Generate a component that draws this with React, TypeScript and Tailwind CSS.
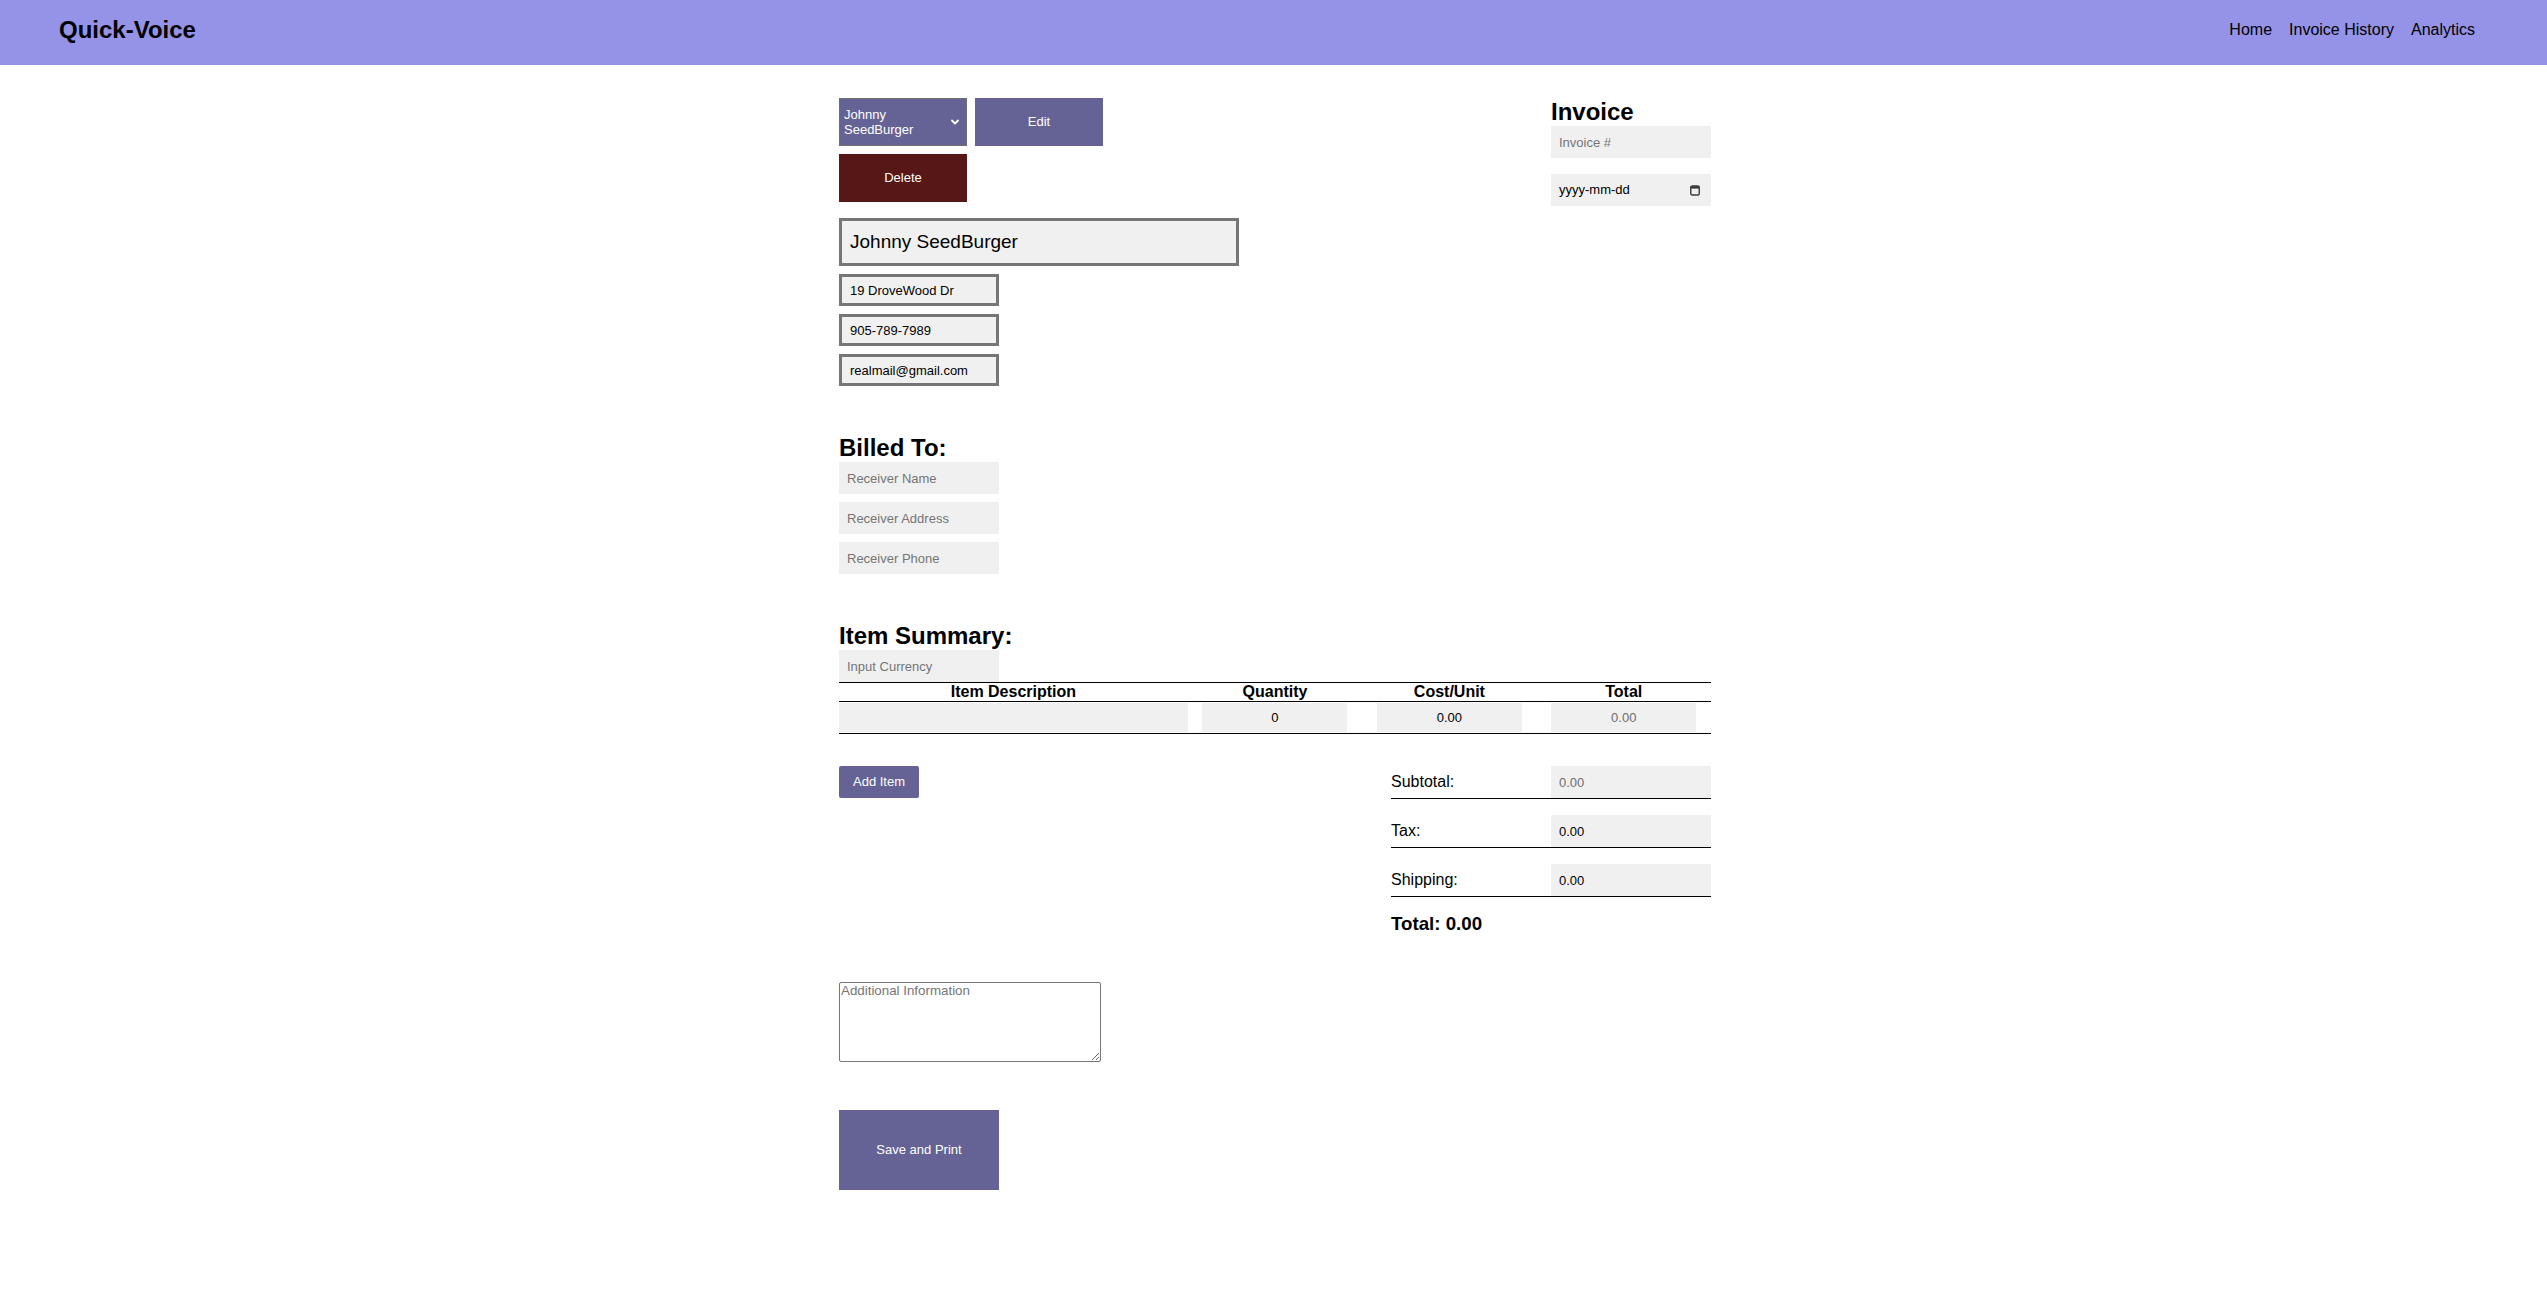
import { useState } from 'react';

const inputBase =
  'h-[32px] w-[160px] bg-[#f0f0f0] px-2 text-[13px] text-black placeholder:text-[#757575] outline-none';

const boxedInput =
  'h-[32px] w-[160px] border-[3px] border-[#767676] bg-[#f0f0f0] px-2 text-[13px] text-black outline-none';

const ChevronDown = () => (
  <svg width="8" height="6" viewBox="0 0 8 6" className="shrink-0">
    <path d="M1 1.5 L4 4.5 L7 1.5" stroke="white" strokeWidth="1.8" fill="none" strokeLinecap="round" strokeLinejoin="round" />
  </svg>
);

const CalendarIcon = () => (
  <svg width="10" height="11" viewBox="0 0 10 11">
    <rect x="0.75" y="1" width="8.5" height="9" rx="1.5" stroke="#3a3a3a" strokeWidth="1.4" fill="none" />
    <rect x="0.75" y="1" width="8.5" height="2.6" fill="#3a3a3a" />
  </svg>
);

const TotalsRow = ({ label, value, muted }: { label: string; value: string; muted?: boolean }) => (
  <div className="flex items-center justify-between border-b border-black">
    <span className="text-[16px] leading-[18px] pb-[1px]">{label}</span>
    <input
      readOnly
      defaultValue={value}
      className={`${inputBase} ${muted ? '!text-[#6d6d6d]' : ''}`}
    />
  </div>
);

export default function App() {
  const [rows] = useState([{ desc: '', qty: '0', cost: '0.00', total: '0.00' }]);

  return (
    <div className="min-h-screen bg-white text-black font-['Liberation_Sans',Arial,sans-serif]">
      <header className="h-[65px] bg-[#9593e8] flex items-center justify-between pl-[59px] pr-[72px] pb-[5px]">
        <h1 className="text-[24px] font-bold leading-[28px]">Quick-Voice</h1>
        <nav className="flex gap-[17px] text-[16px] leading-[18px]">
          <a>Home</a>
          <a>Invoice History</a>
          <a>Analytics</a>
        </nav>
      </header>

      <main className="w-[875px] pl-[3px] mx-auto pt-[33px] pb-[100px]">
        {/* sender + invoice meta */}
        <section className="flex justify-between">
          <div className="flex flex-col">
            <div className="flex gap-2">
              <div className="h-[48px] w-[128px] bg-[#656396] border border-[#6e6e6e] flex items-center justify-between pl-[4px] pr-[7px] text-white text-[13px] leading-[15px]">
                <span className="w-[100px]">Johnny SeedBurger</span>
                <ChevronDown />
              </div>
              <button className="h-[48px] w-[128px] bg-[#656396] text-white text-[13px]">Edit</button>
            </div>
            <button className="mt-2 h-[48px] w-[128px] bg-[#581717] text-white text-[13px]">Delete</button>

            <input
              readOnly
              defaultValue="Johnny SeedBurger"
              className="mt-4 h-[48px] w-[400px] border-[3px] border-[#767676] bg-[#f0f0f0] px-2 text-[19px] outline-none"
            />
            <input readOnly defaultValue="19 DroveWood Dr" className={`mt-2 ${boxedInput}`} />
            <input readOnly defaultValue="905-789-7989" className={`mt-2 ${boxedInput}`} />
            <input readOnly defaultValue="realmail@gmail.com" className={`mt-2 ${boxedInput}`} />
          </div>

          <div className="w-[160px] flex flex-col">
            <h2 className="text-[24px] font-bold leading-[28px]">Invoice</h2>
            <input placeholder="Invoice #" className={inputBase} />
            <div className="mt-4 h-[32px] w-[160px] bg-[#f0f0f0] pl-2 pr-[11px] flex items-center justify-between text-[13px]">
              <span>yyyy-mm-dd</span>
              <CalendarIcon />
            </div>
          </div>
        </section>

        {/* billed to */}
        <section className="mt-12 flex flex-col">
          <h2 className="text-[24px] font-bold leading-[28px]">Billed To:</h2>
          <input placeholder="Receiver Name" className={inputBase} />
          <input placeholder="Receiver Address" className={`mt-2 ${inputBase}`} />
          <input placeholder="Receiver Phone" className={`mt-2 ${inputBase}`} />
        </section>

        {/* items */}
        <section className="mt-12 flex flex-col">
          <h2 className="text-[24px] font-bold leading-[28px]">Item Summary:</h2>
          <input placeholder="Input Currency" className={inputBase} />

          <div className="border-y border-black">
            <div className="grid grid-cols-[40%_20%_20%_20%] border-b border-black text-[16px] font-bold leading-[18px] text-center">
              <span>Item Description</span>
              <span>Quantity</span>
              <span>Cost/Unit</span>
              <span>Total</span>
            </div>
            {rows.map((r, i) => (
              <div key={i} className="grid grid-cols-[40%_20%_20%_20%] items-center h-[31px] text-[13px]">
                <input defaultValue={r.desc} className="h-[29px] w-full bg-[#f0f0f0] px-2 outline-none" />
                <input defaultValue={r.qty} className="mx-auto h-[29px] w-[145px] bg-[#f0f0f0] text-center outline-none" />
                <input defaultValue={r.cost} className="mx-auto h-[29px] w-[145px] bg-[#f0f0f0] text-center outline-none" />
                <input readOnly defaultValue={r.total} className="mx-auto h-[29px] w-[145px] bg-[#f0f0f0] text-center text-[#6d6d6d] outline-none" />
              </div>
            ))}
          </div>
        </section>

        {/* add item + totals */}
        <section className="mt-8 flex justify-between items-start">
          <button className="h-[32px] w-[80px] rounded-[2px] bg-[#656396] text-white text-[13px]">Add Item</button>
          <div className="w-[320px] flex flex-col gap-4">
            <TotalsRow label="Subtotal:" value="0.00" muted />
            <TotalsRow label="Tax:" value="0.00" />
            <TotalsRow label="Shipping:" value="0.00" />
            <h3 className="text-[18.72px] font-bold leading-[22px]">Total: 0.00</h3>
          </div>
        </section>

        <section className="mt-[47px] flex flex-col items-start">
          <textarea
            placeholder="Additional Information"
            className="h-[80px] w-[262px] border border-[#767676] rounded-[2px] px-[1px] py-0 text-[13.33px] leading-[15px] placeholder:text-[#757575] outline-none"
          />
          <button className="mt-[48px] h-[80px] w-[160px] bg-[#656396] text-white text-[13px]">Save and Print</button>
        </section>
      </main>
    </div>
  );
}
